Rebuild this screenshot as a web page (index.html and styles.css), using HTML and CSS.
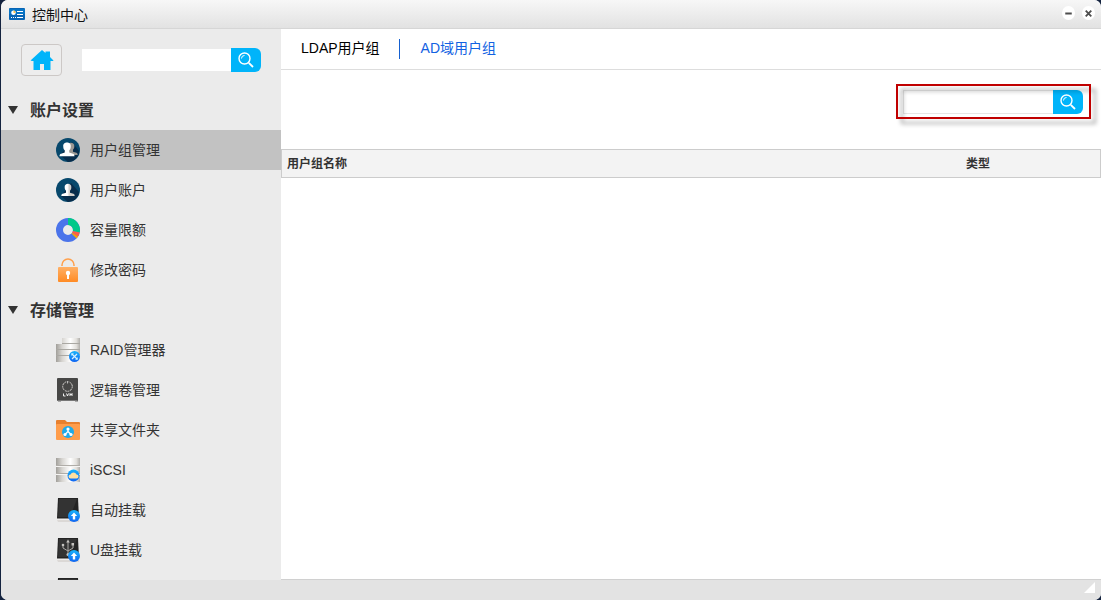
FILE: index.html
```html
<!DOCTYPE html>
<html lang="zh-CN">
<head>
<meta charset="utf-8">
<title>控制中心</title>
<link rel="stylesheet" href="styles.css">
</head>
<body>
<svg class="defs" aria-hidden="true">
  <defs>
    <linearGradient id="silver" gradientUnits="userSpaceOnUse" x1="0" x2="24" y1="0" y2="0"><stop offset="0" stop-color="#a19f9a"/><stop offset=".25" stop-color="#d6d4d0"/><stop offset=".6" stop-color="#fff"/><stop offset=".85" stop-color="#e2e0dc"/><stop offset="1" stop-color="#b0aeaa"/></linearGradient>
    <linearGradient id="blue" x1="0" x2="0" y1="0" y2="1"><stop offset="0" stop-color="#18b4fb"/><stop offset="1" stop-color="#1166f2"/></linearGradient>
    <linearGradient id="orange" x1="0" x2="0" y1="0" y2="1"><stop offset="0" stop-color="#ffb066"/><stop offset="1" stop-color="#ff8b24"/></linearGradient>
    <linearGradient id="face" x1="0" x2="1" y1="0" y2="0"><stop offset=".45" stop-color="#fff"/><stop offset=".6" stop-color="#d3d0cc"/></linearGradient>
    <symbol id="search" viewBox="0 0 16 16"><g fill="none" stroke="#fff"><circle cx="6.5" cy="6.5" r="5.500" stroke-width="1.4"/><path d="M3.500 6.500a3 3 0 0 1 3-3" stroke-width="1"/><path d="M10.800 10.800 15 15" stroke-width="1.8"/></g></symbol>
    <symbol id="person" viewBox="0 0 24 24"><path d="M7 8c-1-7 11-7 10 0 0 3-1 4-2 5v3l5 1.500c1.500.5 2 1.500 2 3.500H2c0-2 .5-3 2-3.500L9 16v-3c-1-1-2-2-2-5z"/></symbol>
    <symbol id="disk" viewBox="0 0 24 24"><path d="M1 20h22l-.5 3.500h-21z" fill="#eeeceb"/><path d="M1 22.500h22v1H2z" fill="#c9c5c2"/><path d="M2 0h20l1 20.500H1z" fill="#242424"/><path d="M3 1h18l-7 18H2z" fill="#333"/></symbol>
    <symbol id="up" viewBox="0 0 12 12"><circle cx="6" cy="6" r="6" fill="url(#blue)"/><path d="M6 2.500 2.800 6h2v3.500h2.400V6h2z" fill="#fff"/></symbol>
  </defs>
</svg>
<div class="window">
  <header class="titlebar">
    <svg class="app-icon" viewBox="0 0 16 12"><rect width="16" height="12" rx="1" fill="#0865b5"/><path d="M0 1h16v5H0z" fill="#0874c5"/><circle cx="4.500" cy="4.800" r="2.300" fill="#fff"/><path d="M4.500 5V2.200a2.500 2.500 0 0 1 2 2.800z" fill="#ffc34a"/><path d="M8 3.500h6M8 6.500h6M8 9.500h6" stroke="#fff"/><path d="M2 9.500h5" stroke="#fff" stroke-dasharray="1 1"/></svg>
    <h1 class="title">控制中心</h1>
    <button class="win-btn" type="button" aria-label="最小化"><svg viewBox="0 0 14 14"><path d="M3.500 7h7" stroke="#4d4d4d" stroke-width="2"/></svg></button>
    <button class="win-btn" type="button" aria-label="关闭"><svg viewBox="0 0 14 14"><path d="m4 4 6 6m0-6-6 6" stroke="#4d4d4d" stroke-width="2"/></svg></button>
  </header>
  <div class="body">
    <aside class="sidebar">
      <div class="tools">
        <button class="home" type="button" aria-label="主页"><svg viewBox="0 0 24 22"><path d="M12 1 .5 11.500 2 12h1.500v9H10v-6h4v6h6.500v-9H23l.5-.5L20 8V2.500h-4.500V4z" fill="#00b4fa"/></svg></button>
        <form class="search">
          <input class="search-input compact" type="text" aria-label="搜索设置">
          <button class="search-btn" type="button" aria-label="搜索"><svg><use href="#search"/></svg></button>
        </form>
      </div>
      <nav class="menu">
        <h2 class="group">账户设置</h2>
        <a class="item active" href="#groups"><svg class="icon" viewBox="0 0 24 24"><circle cx="12" cy="12" r="12" fill="#07486c"/><path d="m16 4 7 9a11 11 0 0 1-11 11l-8-7z" fill="#082d4c"/><use href="#person" x="7" y="3" width="16" height="16" fill="#9c9994"/><use href="#person" x="2" y="2" width="18" height="19" fill="#fff"/></svg>用户组管理</a>
        <a class="item" href="#users"><svg class="icon" viewBox="0 0 24 24"><circle cx="12" cy="12" r="12" fill="#07486c"/><path d="m15 5 8 9a11 11 0 0 1-11 10l-7-6z" fill="#082d4c"/><use href="#person" x="4" y="3" width="16" height="18" fill="url(#face)"/></svg>用户账户</a>
        <a class="item" href="#quota"><svg class="icon" viewBox="0 0 24 24"><g fill="none" stroke-width="7"><circle cx="12" cy="12" r="8.500" stroke="#4b74ea"/><path d="M12 3.500a8.500 8.500 0 0 1 8.300 10.200" stroke="#00c98a"/><path d="M20.300 13.700a8.500 8.500 0 0 1-1.300 3" stroke="#ff5d46"/><path d="M19 16.700a8.500 8.500 0 0 1-1 1.300" stroke="#f7a700"/></g></svg>容量限额</a>
        <a class="item" href="#password"><svg class="icon" viewBox="0 0 24 24"><path d="M6 8V7a6 6 0 0 1 12 0v1" fill="none" stroke="#ffa04c" stroke-width="1.500"/><rect x="2" y="9" width="20" height="15" rx="1" fill="url(#orange)"/><circle cx="12" cy="15" r="2.200" fill="#fff"/><path d="M11 16h2v5h-2z" fill="#fff"/></svg>修改密码</a>
        <h2 class="group">存储管理</h2>
        <a class="item" href="#raid"><svg class="icon" viewBox="0 0 24 24"><path d="M6 0h18v6H6zM0 6h18v6H0zM6 12h18v5H6zM0 12h14v6H0zM0 18h18v6H0zM18 6h6v6h-6z" fill="url(#silver)"/><path d="M6 5.500h18M0 11.500h24M0 17.500h16" stroke="#aaa8a3"/><circle cx="18.500" cy="18.500" r="5.500" fill="url(#blue)"/><path d="m16 16 5 5m0-5-5 5" stroke="#d5f0ff" stroke-width="1.200"/><path d="M15.500 17.500v-2h2m2 6h2v-2" fill="none" stroke="#9bdcff"/></svg>RAID管理器</a>
        <a class="item" href="#lvm"><svg class="icon" viewBox="0 0 24 24"><path d="M2 22h3v2H2zm17 0h3v2h-3z" fill="#aaa"/><rect x="1" width="21" height="23" rx="1" fill="#474746"/><path d="M2 22.500h19" stroke="#777"/><circle cx="11.500" cy="8.500" r="4.800" fill="none" stroke="#d7d5d2" stroke-dasharray="2 .7"/><path d="M11.500 2v3" stroke="#474746" stroke-width="2"/><path d="M11.500 3v2.500" stroke="#eee" stroke-width=".7"/><path d="M7.500 15.500v2.500h2M10.500 15.500l1 2.500 1-2.500m1.500 2.500v-2.500l1 1.500 1-1.500v2.500" fill="none" stroke="#fff" stroke-width=".9"/></svg>逻辑卷管理</a>
        <a class="item" href="#folders"><svg class="icon" viewBox="0 0 24 24"><path d="M0 3a1 1 0 0 1 1-1h8l2 2h12a1 1 0 0 1 1 1v15H0z" fill="#e8802e"/><rect y="6" width="24" height="16" rx="1" fill="#ff9d4b"/><circle cx="12" cy="14" r="6" fill="#1eaae9"/><path d="M12 10.500v3l-3 3m3-3 3 3" fill="none" stroke="#fff" stroke-width="1.300"/><circle cx="12" cy="11" r="1.600" fill="#fff"/><circle cx="9" cy="16.500" r="1.600" fill="#fff"/><circle cx="15" cy="16.500" r="1.600" fill="#fff"/></svg>共享文件夹</a>
        <a class="item" href="#iscsi"><svg class="icon" viewBox="0 0 24 24"><path d="M0 0h24v24H0z" fill="url(#silver)"/><path d="M0 7.500h24M0 15.500h24" stroke="#b0ada8"/><path d="M0 8.500h24M0 16.500h24" stroke="#f5f4f2"/><circle cx="17.500" cy="17.500" r="6" fill="url(#blue)"/><path d="M14.500 20.500a2 2 0 0 1 0-4 3.300 3.300 0 0 1 6 0 2 2 0 0 1 0 4z" fill="#ffe0a0"/></svg>iSCSI</a>
        <a class="item" href="#automount"><svg class="icon" viewBox="0 0 24 24"><use href="#disk" width="24" height="24"/><use href="#up" x="12" y="12" width="12" height="12"/></svg>自动挂载</a>
        <a class="item" href="#usb"><svg class="icon" viewBox="0 0 24 24"><use href="#disk" width="24" height="24"/><path d="M12 3v14M7 7v3l5 3 5-3V6" fill="none" stroke="#aaa8a5"/><path d="m12 1.500-1.800 3h3.600zM15.500 5h2.500v2.500h-2.500z" fill="#c5c3c0"/><circle cx="7" cy="7" r="1.300" fill="#c5c3c0"/><circle cx="12" cy="16.500" r="1.500" fill="#c5c3c0"/><use href="#up" x="12" y="12" width="12" height="12"/></svg>U盘挂载</a>
        <a class="item" href="#more" aria-label="更多"><svg class="icon" viewBox="0 0 24 24"><use href="#disk" width="24" height="24"/></svg></a>
      </nav>
    </aside>
    <main class="main">
      <nav class="tabs">
        <a class="tab" href="#ldap">LDAP用户组</a>
        <a class="tab current" href="#ad">AD域用户组</a>
      </nav>
      <div class="toolbar">
        <form class="search highlighted">
          <input class="search-input bordered" type="text" aria-label="搜索用户组">
          <button class="search-btn" type="button" aria-label="搜索"><svg><use href="#search"/></svg></button>
        </form>
      </div>
      <table class="grid">
        <thead><tr><th class="name" scope="col">用户组名称</th><th class="type" scope="col">类型</th></tr></thead>
      </table>
    </main>
  </div>
  <footer class="statusbar"><svg class="grip" viewBox="0 0 11 11"><path d="M11 0v11H0z" fill="#fff"/></svg></footer>
</div>
</body>
</html>
```
FILE: styles.css
```css
* { box-sizing: border-box; }
body {
  margin: 0;
  padding-left: 1px;
  background: #14233f;
  color: #333;
  font: 14px/20px "Liberation Sans", "Noto Sans CJK SC", sans-serif;
}
a { color: inherit; text-decoration: none; }
button { padding: 0; border: 0; cursor: pointer; }
.defs { position: absolute; width: 0; height: 0; }
.window {
  display: flex;
  flex-direction: column;
  height: 100vh;
  overflow: hidden;
  border-radius: 7px;
  background: #fff;
}

.titlebar {
  display: flex;
  align-items: center;
  gap: 7px;
  flex: none;
  height: 29px;
  padding: 0 6px 0 8px;
  border-bottom: 1px solid #d6d6d6;
  background: linear-gradient(#f7f7f7, #e2e2e2);
}
.app-icon { width: 16px; height: 12px; }
.title { flex: 1; margin: 0; padding-top: 2px; color: #111; font-size: 14px; font-weight: 400; }
.win-btn { width: 13px; height: 14px; margin-bottom: 2px; border-radius: 50%; background: #fff; }
.win-btn svg { display: block; }

.body { display: flex; flex: 1; min-height: 0; }
.sidebar { flex: none; width: 280px; overflow: hidden; background: #ebebeb; }
.tools { display: flex; align-items: center; gap: 20px; height: 61px; padding-left: 20px; }
.home {
  display: grid;
  place-items: center;
  width: 41px;
  height: 32px;
  border: 1px solid #ccc8c6;
  border-radius: 4px;
  background: #ededed;
}
.home svg { width: 24px; height: 22px; }
.search { display: flex; align-items: center; }
.search-input { width: 150px; height: 22px; padding: 0 4px; border: 0; outline: 0; background: #fff; font: inherit; }
.search-input.compact { width: 149px; }
.search-input.bordered { height: 24px; border: 1px solid #e6e6e6; border-right: 0; }
.search-btn { display: grid; place-items: center; width: 30px; height: 24px; border-radius: 0 6px 6px 0; background: #00b4fa; }
.search-btn svg { width: 16px; height: 16px; }

.group {
  display: flex;
  align-items: center;
  gap: 12px;
  height: 40px;
  margin: 0;
  padding: 2px 0 0 7px;
  font-size: 16px;
}
.group::before { content: ""; border: 5px solid transparent; border-top: 8px solid #333; border-bottom: 2px solid transparent; }
.item { display: flex; align-items: center; gap: 10px; height: 40px; padding-left: 55px; }
.item.active { background: #c2c2c2; }
.icon { flex: none; width: 24px; height: 24px; }

.main { flex: 1; min-width: 0; border-bottom: 1px solid #d0d0d0; }
.tabs { display: flex; align-items: center; height: 41px; border-bottom: 1px solid #ddd; }
.tab { padding: 0 19px 2px 20px; color: #000; line-height: 18px; }
.tab.current { padding-left: 21px; border-left: 1px solid #1560d0; color: #1262e2; }
.toolbar { display: flex; justify-content: flex-end; align-items: flex-start; height: 79px; padding: 14px 10px 0 0; }
.highlighted { position: relative; padding: 6px 8px 5px 7px; }
.highlighted::after {
  content: "";
  position: absolute;
  inset: 0;
  border: 2px solid #c00000;
  filter: drop-shadow(5px 5px 2px rgba(0, 0, 0, .35));
  pointer-events: none;
}
.grid { width: 100%; border-collapse: separate; border-spacing: 0; border: 1px solid #ccc; background: #f3f3f3; table-layout: fixed; }
.grid th { height: 27px; padding: 0 5px; font-size: 12px; line-height: 20px; text-align: left; }
.grid .type { width: 139px; }

.statusbar { display: flex; justify-content: flex-end; align-items: flex-start; flex: none; height: 20px; padding: 2px 6px 0 0; background: #e3e3e3; }
.grip { width: 11px; height: 11px; }
```
